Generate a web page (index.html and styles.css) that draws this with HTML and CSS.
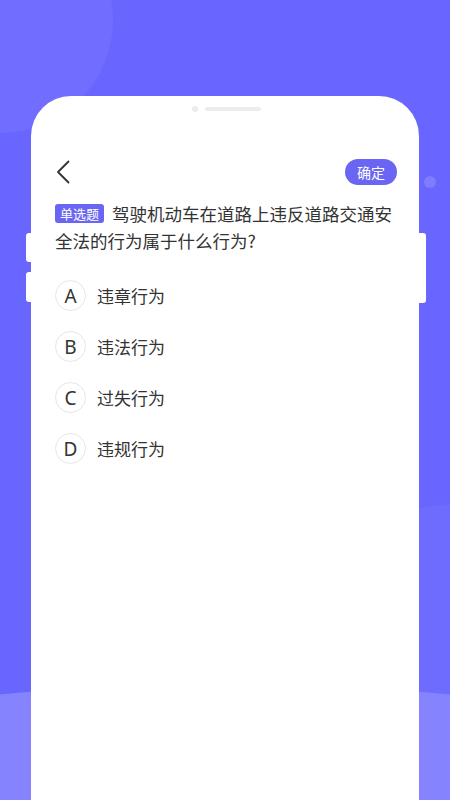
FILE: index.html
```html
<!DOCTYPE html>
<html lang="zh">
<head>
<meta charset="utf-8">
<link rel="stylesheet" href="styles.css">
</head>
<body>
<div class="screen">
  <div class="deco deco-tl"></div>
  <div class="deco deco-r"></div>
  <div class="deco deco-bottom"></div>
  <div class="deco deco-dot"></div>
  <div class="phone">
    <span class="side-btn side-l1"></span>
    <span class="side-btn side-l2"></span>
    <span class="side-btn side-r"></span>
    <div class="notch"><span class="cam"></span><span class="speaker"></span></div>
    <div class="header">
      <svg class="back" width="14" height="24" viewBox="0 0 14 24"><polyline points="12.5,1.5 2,12 12.5,22.5" fill="none" stroke="#333" stroke-width="1.8" stroke-linecap="round" stroke-linejoin="round"/></svg>
      <button class="confirm">确定</button>
    </div>
    <p class="question"><span class="tag">单选题</span><span class="qtext">驾驶机动车在道路上违反道路交通安全法的行为属于什么行为?</span></p>
    <ul class="options">
      <li class="option"><span class="letter">A</span><span class="text">违章行为</span></li>
      <li class="option"><span class="letter">B</span><span class="text">违法行为</span></li>
      <li class="option"><span class="letter">C</span><span class="text">过失行为</span></li>
      <li class="option"><span class="letter">D</span><span class="text">违规行为</span></li>
    </ul>
  </div>
</div>
</body>
</html>
```
FILE: styles.css
```css
* { box-sizing: border-box; }
html, body { margin: 0; padding: 0; }
body {
  font-family: "Noto Sans CJK SC", "Noto Sans", sans-serif;
  color: #333;
}
.screen {
  position: relative;
  width: 450px;
  height: 800px;
  overflow: hidden;
  background: #6966ff;
  padding-top: 96px;
}
.deco { position: absolute; border-radius: 50%; }
.deco-tl {
  left: -113px; top: -93px;
  width: 226px; height: 226px;
  background: rgba(255,255,255,0.05);
}
.deco-r {
  left: 300px; top: 505px;
  width: 300px; height: 300px;
  background: rgba(255,255,255,0.04);
}
.deco-bottom {
  left: -475px; top: 684px;
  width: 1400px; height: 400px;
  background: #8683ff;
}
.deco-dot {
  left: 424px; top: 176px;
  width: 12px; height: 12px;
  background: rgba(255,255,255,0.15);
}
.phone {
  position: relative;
  margin-left: 31px;
  width: 388px;
  height: 704px;
  background: #fff;
  border-radius: 40px 40px 0 0;
  padding: 10px 22px 0 24px;
}
.side-btn {
  position: absolute;
  background: #fff;
  border-radius: 3px;
}
.side-l1 { left: -5px; top: 137px; width: 8px; height: 29px; }
.side-l2 { left: -5px; top: 176px; width: 8px; height: 30px; }
.side-r { right: -7px; top: 137px; width: 10px; height: 70px; }
.notch {
  display: flex;
  justify-content: center;
  align-items: center;
  gap: 7px;
  height: 6px;
  margin-left: 1px;
}
.cam { width: 6px; height: 6px; border-radius: 50%; background: #ececec; }
.speaker { width: 56px; height: 4px; border-radius: 2px; background: #ececec; }
.header {
  display: flex;
  justify-content: space-between;
  align-items: center;
  margin-top: 47px;
  height: 26px;
}
.back { display: block; margin-left: 1px; }
.confirm {
  border: none;
  background: #6a66f3;
  color: #fff;
  font-family: inherit;
  font-size: 14px;
  width: 52px;
  height: 26px;
  border-radius: 13px;
  padding: 0;
  line-height: 26px;
}
.question {
  margin: 15px 0 0;
  font-size: 17.5px;
  line-height: 27px;
  color: #333;
}
.tag {
  display: inline-block;
  background: #6a66f3;
  color: #fff;
  font-size: 13px;
  line-height: 19px;
  padding: 0 5px;
  border-radius: 3px;
  margin-right: 8px;
  vertical-align: 2px;
}
.options {
  list-style: none;
  margin: 16px 0 0;
  padding: 0;
}
.option {
  display: flex;
  align-items: center;
  height: 51px;
}
.letter {
  width: 31px;
  height: 31px;
  border: 1px solid #e6e6e6;
  border-radius: 50%;
  display: flex;
  align-items: center;
  justify-content: center;
  font-family: "Noto Sans", sans-serif;
  font-size: 19px;
  color: #333;
}
.text {
  margin-left: 11px;
  font-size: 17px;
  color: #333;
}
```
